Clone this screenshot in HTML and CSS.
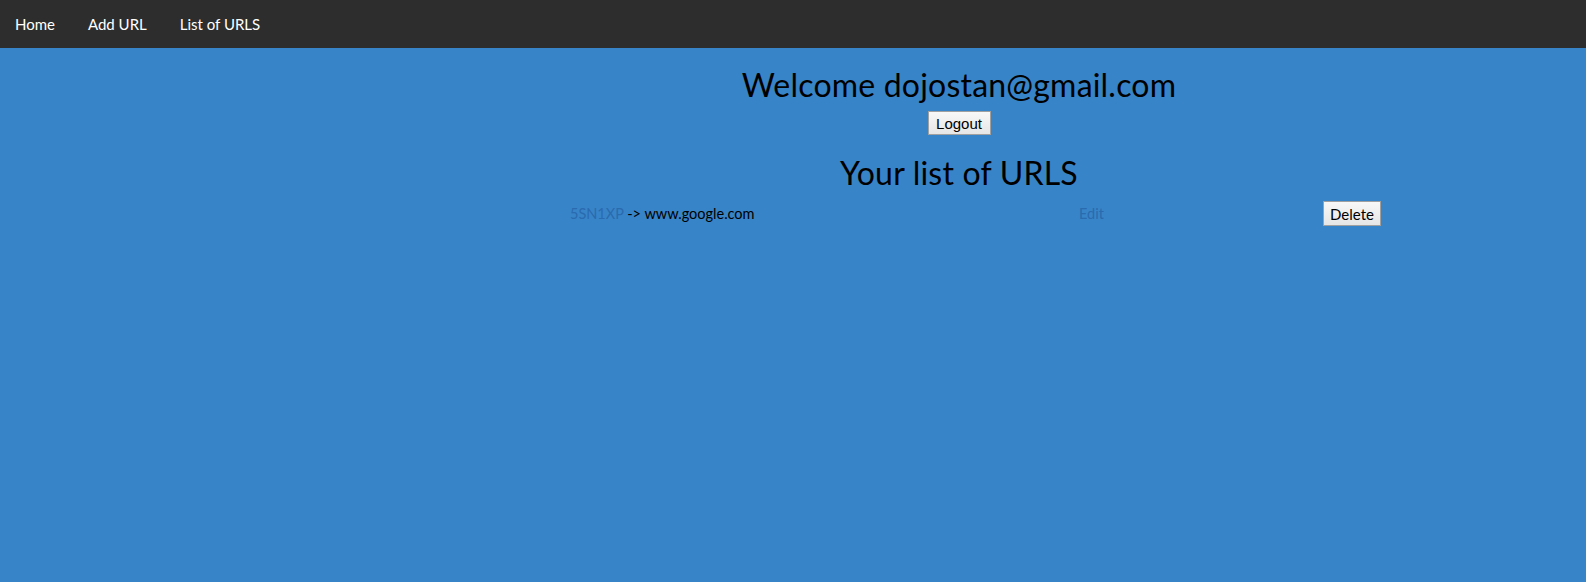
FILE: index.html
```html
<!DOCTYPE html>
<html>
<head>
<meta charset="utf-8">
<link rel="stylesheet" href="styles.css">
</head>
<body>
<nav class="navbar">
  <a class="nav-link" href="#">Home</a>
  <a class="nav-link" href="#">Add URL</a>
  <a class="nav-link" href="#">List of URLS</a>
</nav>
<main class="main">
  <h1 class="title">Welcome dojostan@gmail.com</h1>
  <div class="center"><button class="btn btn-logout">Logout</button></div>
  <h2 class="title title-list">Your list of URLS</h2>
  <div class="url-row">
    <div class="cell"><a class="link" href="#">5SN1XP</a> -&gt; www.google.com</div>
    <div class="cell"><a class="link" href="#">Edit</a></div>
    <div class="cell"><button class="btn btn-delete">Delete</button></div>
  </div>
</main>
</body>
</html>
```
FILE: styles.css
```css
html, body {
  margin: 0;
  padding: 0;
}
body {
  background: #3884c8;
  font-family: Lato, "Open Sans", sans-serif;
  color: #000;
  min-height: 582px;
}
.navbar {
  background: #2d2d2d;
  height: 48px;
  display: flex;
  align-items: center;
}
.nav-link {
  color: #fff;
  text-decoration: none;
  font-size: 15px;
  padding: 0 16px 0 15px;
}
.nav-link + .nav-link {
  padding-left: 17px;
}
.main {
  margin-left: 537px;
  width: 844px;
  padding-top: 19px;
}
.title {
  margin: 0;
  font-weight: 400;
  font-size: 32px;
  text-align: center;
  line-height: 36px;
  letter-spacing: 0.2px;
}
.center {
  text-align: center;
  margin-top: 8px;
  height: 24px;
}
.title-list {
  margin-top: 20px;
}
.btn {
  background: linear-gradient(#f8f8f8, #e6e6e6);
  border: 1px solid #a0a0a0;
  color: #000;
  padding: 0;
  height: 24px;
  vertical-align: top;
}
.btn-logout {
  font-family: "Liberation Sans", Arial, sans-serif;
  font-size: 15px;
  width: 63px;
}
.btn-delete {
  font-family: Lato, "Open Sans", sans-serif;
  font-size: 15px;
  width: 58px;
  height: 25px;
}
.url-row {
  display: grid;
  grid-template-columns: 509px 244px auto;
  align-items: center;
  margin-left: 33px;
  margin-top: 10px;
  font-size: 14.5px;
}
.link {
  color: #2a6aae;
  text-decoration: none;
}
```
